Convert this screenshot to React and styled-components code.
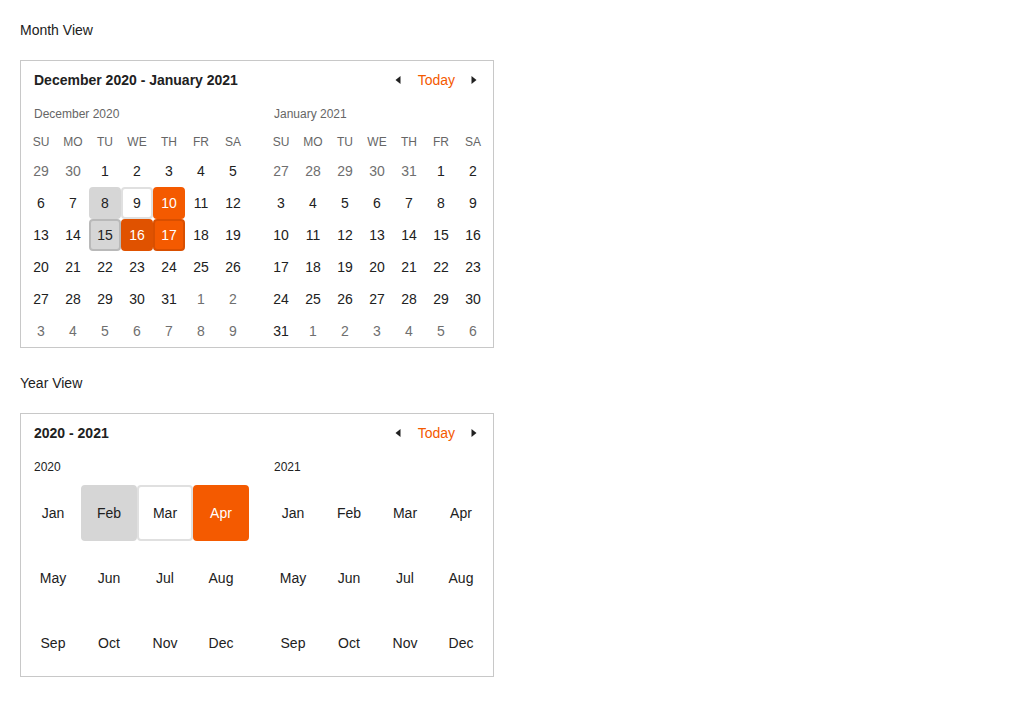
import React from "react";
import styled, { createGlobalStyle, css } from "styled-components";

const Global = createGlobalStyle`
  html, body { margin: 0; padding: 0; background: #fff; }
  body { font-family: "Liberation Sans", Arial, sans-serif; color: #212121; }
`;

const ORANGE = "#f45a00";

const Page = styled.div`
  padding: 20px;
  display: flex;
  flex-direction: column;
  align-items: flex-start;
`;

const SectionLabel = styled.div`
  font-size: 14px;
  line-height: 20px;
  color: #212121;
  margin-bottom: 20px;
  margin-top: ${(p) => (p.$first ? "0" : "25px")};
`;

const Calendar = styled.div`
  width: 472px;
  border: 1px solid #c8c8c8;
  background: #fff;
`;

const Header = styled.div`
  height: 38px;
  display: flex;
  align-items: center;
  justify-content: space-between;
  padding: 0 7px 0 13px;
`;

const Title = styled.div`
  font-size: 14px;
  font-weight: bold;
  color: #212121;
  line-height: 20px;
`;

const Nav = styled.div`
  display: flex;
  align-items: center;
`;

const NavButton = styled.span`
  width: 24px;
  height: 24px;
  display: inline-flex;
  align-items: center;
  justify-content: center;
`;

const Today = styled.span`
  font-size: 14px;
  color: ${ORANGE};
  margin: 0 7px 0 8px;
  line-height: 20px;
`;

const Views = styled.div`
  display: flex;
  gap: 16px;
  padding: 0 4px ${(p) => p.$pb || 0}px;
`;

const MonthBlock = styled.div`
  width: 224px;
`;

const Subtitle = styled.div`
  height: 28px;
  line-height: 30px;
  padding-left: 9px;
  font-size: 12px;
  color: ${(p) => (p.$dark ? "#212121" : "#666")};
`;

const Grid = styled.div`
  display: grid;
  grid-template-columns: repeat(${(p) => p.$cols}, ${(p) => p.$cw}px);
  grid-template-rows: ${(p) => (p.$head ? `${p.$head}px` : "")};
  grid-auto-rows: ${(p) => p.$rh}px;
  align-items: center;
  justify-items: center;
`;

const HeadCell = styled.div`
  height: 28px;
  line-height: 30px;
  width: 32px;
  text-align: center;
  font-size: 12px;
  color: #666;
`;

const stateStyles = {
  hover: css`
    background: #d6d6d6;
    border-color: #d6d6d6;
  `,
  focus: css`
    background: #fff;
    border-color: #e0e0e0;
  `,
  focusHover: css`
    background: #d6d6d6;
    border-color: #b9b9b9;
  `,
  selected: css`
    background: ${ORANGE};
    border-color: ${ORANGE};
    color: #fff;
  `,
  selectedHover: css`
    background: #e05200;
    border-color: #e05200;
    color: #fff;
  `,
  selectedFocus: css`
    background: ${ORANGE};
    border-color: #d94f00;
    color: #fff;
  `,
};

const Cell = styled.div`
  box-sizing: border-box;
  width: ${(p) => p.$size}px;
  height: ${(p) => p.$size}px;
  border: 2px solid transparent;
  border-radius: 4px;
  display: flex;
  align-items: center;
  justify-content: center;
  font-size: 14px;
  color: ${(p) => (p.$other ? "#6f6f6f" : "#212121")};
  ${(p) => p.$state && stateStyles[p.$state]}
`;

const Arrow = ({ dir }) => (
  <svg width="6" height="8" viewBox="0 0 6 8">
    {dir === "left" ? (
      <polygon points="5.5,0 5.5,8 0.5,4" fill="#212121" />
    ) : (
      <polygon points="0.5,0 0.5,8 5.5,4" fill="#212121" />
    )}
  </svg>
);

const CalHeader = ({ title }) => (
  <Header>
    <Title>{title}</Title>
    <Nav>
      <NavButton>
        <Arrow dir="left" />
      </NavButton>
      <Today>Today</Today>
      <NavButton>
        <Arrow dir="right" />
      </NavButton>
    </Nav>
  </Header>
);

const DAYS = ["SU", "MO", "TU", "WE", "TH", "FR", "SA"];

function buildMonth(year, month) {
  const first = new Date(year, month, 1);
  const start = new Date(year, month, 1 - first.getDay());
  const cells = [];
  for (let i = 0; i < 42; i++) {
    const d = new Date(start.getFullYear(), start.getMonth(), start.getDate() + i);
    cells.push({ day: d.getDate(), other: d.getMonth() !== month, key: i });
  }
  return cells;
}

const decStates = { 8: "hover", 9: "focus", 10: "selected", 15: "focusHover", 16: "selectedHover", 17: "selectedFocus" };

const MonthCal = ({ name, year, month, states }) => (
  <MonthBlock>
    <Subtitle>{name}</Subtitle>
    <Grid $cols={7} $cw={32} $rh={32} $head={28}>
      {DAYS.map((d) => (
        <HeadCell key={d}>{d}</HeadCell>
      ))}
      {buildMonth(year, month).map((c) => (
        <Cell key={c.key} $size={32} $other={c.other} $state={!c.other && states ? states[c.day] : undefined}>
          {c.day}
        </Cell>
      ))}
    </Grid>
  </MonthBlock>
);

const MONTHS = ["Jan", "Feb", "Mar", "Apr", "May", "Jun", "Jul", "Aug", "Sep", "Oct", "Nov", "Dec"];
const yearStates = { Feb: "hover", Mar: "focus", Apr: "selected" };

const YearCal = ({ name, states }) => (
  <MonthBlock>
    <Subtitle $dark>{name}</Subtitle>
    <Grid $cols={4} $cw={56} $rh={65}>
      {MONTHS.map((m) => (
        <Cell key={m} $size={56} $state={states ? states[m] : undefined}>
          {m}
        </Cell>
      ))}
    </Grid>
  </MonthBlock>
);

export default function App() {
  return (
    <>
      <Global />
      <Page>
        <SectionLabel $first>Month View</SectionLabel>
        <Calendar>
          <CalHeader title="December 2020 - January 2021" />
          <Views>
            <MonthCal name="December 2020" year={2020} month={11} states={decStates} />
            <MonthCal name="January 2021" year={2021} month={0} />
          </Views>
        </Calendar>
        <SectionLabel>Year View</SectionLabel>
        <Calendar>
          <CalHeader title="2020 - 2021" />
          <Views $pb={1}>
            <YearCal name="2020" states={yearStates} />
            <YearCal name="2021" />
          </Views>
        </Calendar>
      </Page>
    </>
  );
}
